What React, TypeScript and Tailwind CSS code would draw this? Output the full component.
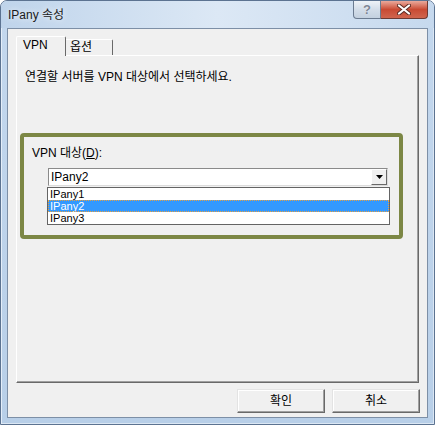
import React from "react";

const ui = { fontFamily: '"Liberation Sans", "Noto Sans CJK KR", sans-serif' };

function CaptionButtons() {
  return (
    <div className="absolute top-0 right-[6px] flex">
      <div className="w-[28px] h-[18px] rounded-bl-[4px] border border-t-0 border-[#6b7b90] bg-gradient-to-b from-[#eef2f7] via-[#d3dde9] to-[#c3d0df] flex items-center justify-center">
        <span className="text-[13px] font-bold leading-none text-[#7c8593] [text-shadow:0_0_1px_#fff]">?</span>
      </div>
      <div className="w-[47px] h-[18px] rounded-br-[4px] border border-t-0 border-l-0 border-[#6e3a33] bg-gradient-to-b from-[#e9a99c] via-[#c94a33] to-[#d0654e] flex items-center justify-center">
        <svg width="14" height="11" viewBox="0 0 14 11">
          <path d="M2 1.5 L12 9.5 M12 1.5 L2 9.5" stroke="#5a2a22" strokeWidth="4" strokeLinecap="round" />
          <path d="M2 1.5 L12 9.5 M12 1.5 L2 9.5" stroke="#ffffff" strokeWidth="2.2" strokeLinecap="round" />
        </svg>
      </div>
    </div>
  );
}

function Combo() {
  return (
    <div className="relative ml-[20px] mt-[8px] w-[340px]">
      <div className="h-[18px] flex border border-[#8a8a8a] border-r-[#dcdcdc] border-b-[#dcdcdc] bg-white">
        <span className="flex-1 pl-[2px] text-[12px] leading-[16px] text-black">IPany2</span>
        <div className="w-[16px] h-[16px] bg-[#f0f0f0] border border-white border-r-[#696969] border-b-[#696969] flex items-center justify-center">
          <svg width="7" height="4" viewBox="0 0 7 4">
            <path d="M0 0 H7 L3.5 4 Z" fill="#000" />
          </svg>
        </div>
      </div>
      {/* open dropdown list */}
      <div className="absolute left-[-1px] top-[19px] w-[343px] border border-[#646464] bg-white text-[11px] leading-[12px]">
        <div className="h-[12px] overflow-hidden pl-[2px] text-black">IPany1</div>
        <div className="h-[12px] overflow-hidden pl-[2px] bg-[#3399ff] text-white outline-1 outline-dotted outline-[#e8a040] -outline-offset-1">IPany2</div>
        <div className="h-[12px] overflow-hidden pl-[2px] text-black">IPany3</div>
      </div>
    </div>
  );
}

function Button({ label }: { label: string }) {
  return (
    <div className="w-[88px] h-[24px] border border-[#e3e3e3] border-r-[#696969] border-b-[#696969] bg-[#f0f0f0] shadow-[inset_-1px_-1px_0_#a0a0a0,inset_1px_1px_0_#ffffff] flex items-center justify-center text-[12px] text-black">
      {label}
    </div>
  );
}

export default function App() {
  return (
    <div className="w-[435px] h-[425px] bg-white" style={ui}>
      <div className="relative w-full h-full flex flex-col rounded-t-[7px] border border-[#5c7391] bg-gradient-to-b from-[#c4d8ee] to-[#b8cfe8] shadow-[inset_1px_1px_0_#e4eef9,inset_-1px_-1px_0_#dbe7f4]">
        <div className="h-[27px] flex items-center pl-[7px] rounded-t-[6px] bg-gradient-to-r from-[#bfd4eb] via-[#dce8f5] to-[#c6d9ee]">
          <span className="text-[12px] text-[#1a1a1a] [text-shadow:0_0_6px_#ffffff]">IPany 속성</span>
        </div>
        <CaptionButtons />
        <div className="mx-[6px] mb-[6px] flex-1 flex flex-col border border-[#7d8fa6] bg-[#f0f0f0] pl-[8px] pr-[8px] pt-[7px]">
          {/* tabs */}
          <div className="h-[19px] flex items-end">
            <div className="relative z-10 h-[20px] w-[50px] -mb-px bg-[#f0f0f0] border-l border-t border-white border-r border-r-[#696969] rounded-t-[2px] pl-[6px] pt-[1px] text-[12px] leading-[14px] text-black">
              VPN
            </div>
            <div className="h-[16px] w-[47px] border-t border-white border-r border-r-[#696969] rounded-tr-[2px] pl-[4px] text-[12px] leading-[14px] text-black">
              옵션
            </div>
          </div>
          {/* tab page */}
          <div className="h-[328px] flex flex-col border border-white border-r-[#696969] border-b-[#696969] shadow-[inset_-1px_-1px_0_#a0a0a0] pt-[14px]">
            <p className="pl-[8px] text-[12px] leading-[14px] text-black">연결할 서버를 VPN 대상에서 선택하세요.</p>
            <div className="ml-[3px] mt-[49px] w-[383px] h-[106px] border-4 border-[#7c8745] rounded-[4px] pt-[9px] pl-[4px]">
              <div className="pl-[4px] text-[12px] leading-[14px] text-black">
                VPN 대상(<span className="underline">D</span>):
              </div>
              <Combo />
            </div>
          </div>
          {/* buttons */}
          <div className="mt-[6px] -mr-px flex justify-end gap-[7px]">
            <Button label="확인" />
            <Button label="취소" />
          </div>
        </div>
      </div>
    </div>
  );
}
